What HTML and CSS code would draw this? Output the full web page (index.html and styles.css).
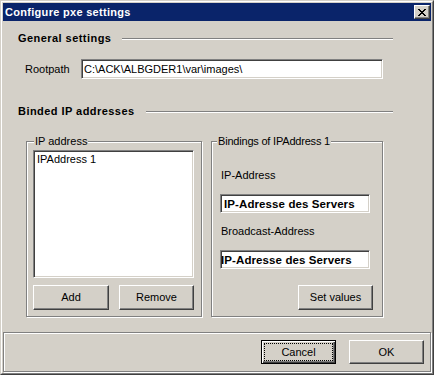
FILE: index.html
```html
<!DOCTYPE html>
<html lang="en">
<head>
    <meta charset="UTF-8">
    <title>Configure pxe settings</title>
    <link rel="stylesheet" href="styles.css">
</head>
<body>
    <div class="window">
        <div class="frame">
            <div class="titlebar">
                <span class="title">Configure pxe settings</span>
                <button class="close" title="Close">
                    <svg width="8" height="7" viewBox="0 0 8 7">
                        <path d="M0 0h2v1H0z M6 0h2v1H6z M1 1h2v1H1z M5 1h2v1H5z M2 2h4v1H2z M3 3h2v1H3z M2 4h4v1H2z M1 5h2v1H1z M5 5h2v1H5z M0 6h2v1H0z M6 6h2v1H6z" fill="#000"/>
                    </svg>
                </button>
            </div>

            <div class="content">
                <div class="section-head">
                    <span>General settings</span>
                    <span class="etch"></span>
                </div>

                <div class="field-row">
                    <label class="field-label">Rootpath</label>
                    <input class="textbox rootpath" type="text" value="C:\ACK\ALBGDER1\var\images\" readonly>
                </div>

                <div class="section-head binded">
                    <span>Binded IP addresses</span>
                    <span class="etch"></span>
                </div>

                <div class="groups">
                    <div class="group group-list">
                        <span class="group-label">IP address</span>
                        <div class="listbox">
                            <div class="list-item">IPAddress 1</div>
                        </div>
                        <div class="btn-row">
                            <button class="btn btn-add">Add</button>
                            <button class="btn btn-remove">Remove</button>
                        </div>
                    </div>

                    <div class="group group-bind">
                        <span class="group-label">Bindings of IPAddress 1</span>
                        <span class="small-label first">IP-Address</span>
                        <input class="textbox bold-box" type="text" value="IP-Adresse des Servers" readonly>
                        <span class="small-label">Broadcast-Address</span>
                        <input class="textbox bold-box scrolled" type="text" value="IP-Adresse des Servers" readonly>
                        <button class="btn btn-set">Set values</button>
                    </div>
                </div>
            </div>

            <div class="footer">
                <button class="btn btn-default"><span class="focus">Cancel</span></button>
                <button class="btn">OK</button>
            </div>
        </div>
    </div>
</body>
</html>
```

FILE: styles.css
```css
* {
    box-sizing: border-box;
}
body {
    margin: 0;
    background: #d4d0c8;
    font-family: "Liberation Sans", Arial, sans-serif;
    font-size: 11px;
    line-height: 13px;
    color: #000;
}
.window {
    width: 434px;
    height: 375px;
    background: #d4d0c8;
    border: 1px solid;
    border-color: #d4d0c8 #404040 #404040 #d4d0c8;
}
.frame {
    height: 100%;
    padding: 1px;
    border: 1px solid;
    border-color: #fff #808080 #808080 #fff;
    display: flex;
    flex-direction: column;
}

/* title bar */
.titlebar {
    height: 18px;
    background: #0a246a;
    display: flex;
    align-items: center;
    padding-left: 2px;
}
.title {
    flex: 1;
    color: #fff;
    font-weight: bold;
    letter-spacing: 0.3px;
}
.close {
    width: 16px;
    height: 14px;
    margin-right: 1px;
    padding: 0;
    background: #d4d0c8;
    border: 1px solid;
    border-color: #fff #404040 #404040 #fff;
    box-shadow: inset -1px -1px 0 #808080;
    display: flex;
    align-items: center;
    justify-content: center;
}
.close svg {
    display: block;
    margin: 0 1px 0 0;
}

/* content */
.content {
    flex: 1;
    padding: 11px 38px 0 15px;
}
.section-head {
    display: flex;
    align-items: center;
    gap: 11px;
    font-weight: bold;
    letter-spacing: 0.45px;
}
.section-head.binded {
    margin-top: 26px;
}
.etch {
    flex: 1;
    height: 2px;
    border-top: 1px solid #808080;
    border-bottom: 1px solid #fff;
}
.field-row {
    display: flex;
    align-items: center;
    margin-top: 14px;
}
.field-label {
    width: 63px;
    padding-left: 7px;
}
.textbox {
    height: 20px;
    margin: 0;
    padding: 0 1px;
    font: inherit;
    color: #000;
    background: #fff;
    border: 1px solid;
    border-color: #808080 #fff #fff #808080;
    box-shadow: inset 1px 1px 0 #404040, inset -1px -1px 0 #d4d0c8;
    outline: none;
}
.rootpath {
    width: 302px;
    padding-left: 2px;
}

/* group boxes */
.groups {
    display: flex;
    gap: 9px;
    margin: 23px 0 0 8px;
}
.group {
    height: 176px;
    display: flex;
    flex-direction: column;
    border: 1px solid #808080;
    box-shadow: inset 1px 1px 0 #fff, 1px 1px 0 #fff;
    padding: 0 7px 6px 6px;
}
.group-list {
    width: 176px;
}
.group-bind {
    width: 172px;
    padding-right: 9px;
}
.group-label {
    align-self: flex-start;
    margin: -7px 0 0 1px;
    padding: 0 1px;
    background: #d4d0c8;
}
.group-bind .group-label {
    margin-left: -1px;
    letter-spacing: -0.2px;
}
.listbox {
    height: 128px;
    margin-top: 2px;
    width: 161px;
    background: #fff;
    border: 1px solid;
    border-color: #808080 #fff #fff #808080;
    box-shadow: inset 1px 1px 0 #404040, inset -1px -1px 0 #d4d0c8;
    padding: 2px 3px;
}
.btn-row {
    display: flex;
    justify-content: space-between;
    margin-top: 7px;
    width: 161px;
}
.small-label {
    margin: 12px 0 0 3px;
}
.small-label.first {
    margin-top: 21px;
}
.bold-box {
    width: 150px;
    height: 19px;
    margin: 12px 0 0 2px;
    padding-left: 3px;
    font-size: 11.5px;
    font-weight: bold;
    letter-spacing: 0.1px;
}
.bold-box.scrolled {
    padding-left: 0;
}

/* buttons */
.btn {
    width: 75px;
    height: 24px;
    padding: 0;
    font: inherit;
    color: #000;
    background: #d4d0c8;
    border: 1px solid;
    border-color: #fff #404040 #404040 #fff;
    box-shadow: inset -1px -1px 0 #808080;
}
.btn-add {
    width: 76px;
    height: 25px;
}
.btn-remove {
    height: 25px;
}
.btn-set {
    margin-top: auto;
    align-self: flex-end;
    height: 25px;
}
.btn-default {
    border: 1px solid #000;
    box-shadow: inset 1px 1px 0 #fff, inset -1px -1px 0 #404040, inset -2px -2px 0 #808080;
    padding: 3px;
}
.focus {
    display: flex;
    align-items: center;
    justify-content: center;
    height: 100%;
    outline: 1px dotted #000;
}

/* footer */
.footer {
    height: 40px;
    display: flex;
    justify-content: flex-end;
    gap: 13px;
    padding: 7px 6px 0 0;
    border: 1px solid #808080;
    box-shadow: inset 1px 1px 0 #fff, 1px 1px 0 #fff;
}
```
